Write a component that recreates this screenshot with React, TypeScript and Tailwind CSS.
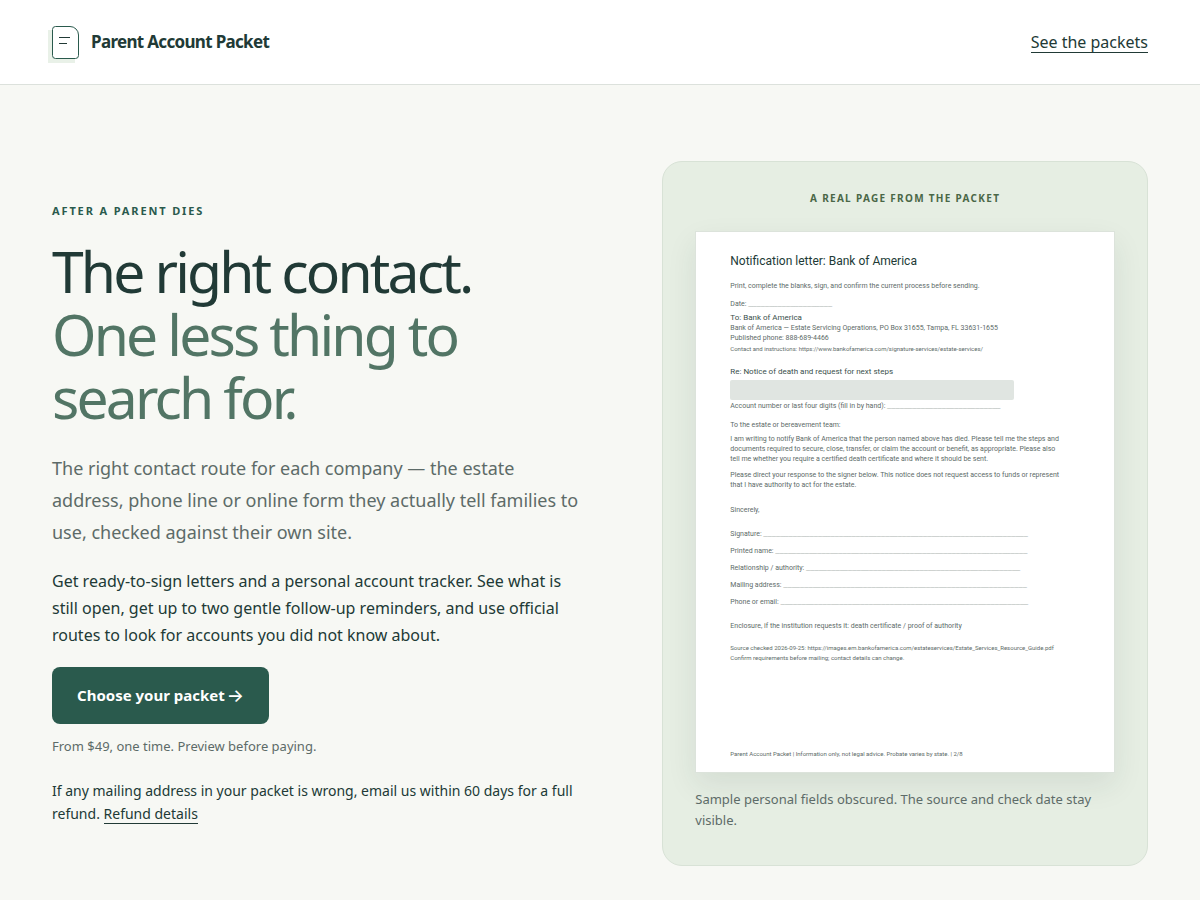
interface SignatureField {
  label: string;
  blanks: number;
}

const signatureFields: SignatureField[] = [
  { label: "Signature:", blanks: 63 },
  { label: "Printed name:", blanks: 60 },
  { label: "Relationship / authority:", blanks: 51 },
  { label: "Mailing address:", blanks: 58 },
  { label: "Phone or email:", blanks: 59 },
];

const Blank: React.FC<{ count: number }> = ({ count }) => {
  return (
    <span className="font-['Liberation_Mono',monospace] text-[#7b8784]">{"_".repeat(count)}</span>
  );
};

const Logo = () => {
  return (
    <svg width="31" height="34" viewBox="0 0 31 34" fill="none" aria-hidden="true" className="-ml-1 overflow-visible">
      <path d="M0 5h27v33H0z" fill="#e9f1e8" />
      <path
        d="M7.5 1.5H22a8.500 8.500 0 0 1 8.500 8.500v20.500a3 3 0 0 1-3 3h-20a3 3 0 0 1-3-3v-26a3 3 0 0 1 3-3z"
        fill="#fff"
        stroke="#2a5a4d"
      />
      <path d="M11 12.500h11M11 18.500h8" stroke="#213a36" />
    </svg>
  );
};

const Header = () => {
  return (
    <header className="border-b border-[#dce1dc] bg-white">
      <div className="flex h-[84px] items-center justify-between px-[52px]">
        <a href="#" className="flex items-center gap-3 text-[17px] font-bold tracking-[-0.04em]">
          <Logo />
          Parent Account Packet
        </a>
        <a href="#packets" className="border-b border-[#213a36] text-base leading-5">
          See the packets
        </a>
      </div>
    </header>
  );
};

const SamplePage = () => {
  return (
    <article className="flex aspect-[420/542] flex-col border border-[#dce3db] bg-white pt-[21px] pr-7 pb-[13px] pl-[34px] font-['Roboto',sans-serif] text-[7px] leading-[10px] text-[#5d6b68] shadow-[0_12px_28px_rgba(33,58,54,0.09)]">
      <h2 className="text-xs leading-4 text-[#213a36]">Notification letter: Bank of America</h2>
      <p className="mt-3">Print, complete the blanks, sign, and confirm the current process before sending.</p>
      <p className="mt-2">
        Date: <Blank count={20} />
      </p>
      <p className="mt-1 text-[8px] text-[#3a504c]">To: Bank of America</p>
      <p>Bank of America — Estate Servicing Operations, PO Box 31655, Tampa, FL 33631-1655</p>
      <p>Published phone: 888-689-4466</p>
      <p className="mt-px text-[6px]">
        Contact and instructions: https://www.bankofamerica.com/signature-services/estate-services/
      </p>
      <p className="mt-[13px] text-[8px] text-[#3a504c]">Re: Notice of death and request for next steps</p>
      <div className="mt-[3px] h-5 w-[284px] rounded-xs bg-[#e0e5e1]" />
      <p className="mt-px">
        Account number or last four digits (fill in by hand): <Blank count={27} />
      </p>
      <p className="mt-[9px]">To the estate or bereavement team:</p>
      <p className="mt-1 whitespace-nowrap">
        I am writing to notify Bank of America that the person named above has died. Please tell me the steps and
        <br />
        documents required to secure, close, transfer, or claim the account or benefit, as appropriate. Please also
        <br />
        tell me whether you require a certified death certificate and where it should be sent.
      </p>
      <p className="mt-1.5 whitespace-nowrap">
        Please direct your response to the signer below. This notice does not request access to funds or represent
        <br />
        that I have authority to act for the estate.
      </p>
      <p className="mt-[15px]">Sincerely,</p>
      <div className="mt-3.5 flex flex-col gap-[7px]">
        {signatureFields.map((field) => (
          <p key={field.label}>
            {field.label} <Blank count={field.blanks} />
          </p>
        ))}
      </div>
      <p className="mt-3.5">Enclosure, if the institution requests it: death certificate / proof of authority</p>
      <p className="mt-3 text-[6px]">
        Source checked 2026-09-25: https://images.em.bankofamerica.com/estateservices/Estate_Services_Resource_Guide.pdf
        <br />
        Confirm requirements before mailing; contact details can change.
      </p>
      <p className="mt-auto text-[6px]">
        Parent Account Packet | Information only, not legal advice. Probate varies by state. | 2/8
      </p>
    </article>
  );
};

const Hero = () => {
  return (
    <section className="grid grid-cols-[1.1fr_1fr] items-center gap-[76px] px-[52px] pt-[76px] pb-[34px]">
      <div className="pt-0.5">
        <p className="text-[11px] leading-4 font-bold tracking-[0.17em] text-[#2a5a4d] uppercase">
          After a parent dies
        </p>
        <h1 className="mt-[21px] text-[57px] leading-[63px] tracking-[-0.05em]">
          The right contact.
          <br />
          <span className="text-[#527565]">One less thing to search for.</span>
        </h1>
        <p className="mt-[23px] text-lg leading-8 text-[#5d6b68]">
          The right contact route for each company — the estate address, phone line or online form they actually tell
          families to use, checked against their own site.
        </p>
        <p className="mt-5 text-base leading-[27px]">
          Get ready-to-sign letters and a personal account tracker. See what is still open, get up to two gentle
          follow-up reminders, and use official routes to look for accounts you did not know about.
        </p>
        <a
          href="#packets"
          className="mt-[18px] inline-flex h-[57px] items-center gap-0.5 rounded-lg bg-[#2a5a4d] px-[25px] text-[15px] leading-[21px] font-bold text-white"
        >
          Choose your packet <span className="font-['Inter',sans-serif] text-lg leading-none font-medium">→</span>
        </a>
        <p className="mt-3 text-[13px] leading-5 text-[#5d6b68]">From $49, one time. Preview before paying.</p>
        <p className="mt-[23px] text-sm leading-[23px]">
          If any mailing address in your packet is wrong, email us within 60 days for a full refund.{" "}
          <a href="#refunds" className="border-b border-[#213a36]">
            Refund details
          </a>
        </p>
      </div>
      <figure className="rounded-[20px] border border-[#d8e2d6] bg-[#e6eee3] px-8 pt-7 pb-[34px]">
        <p className="mb-[25px] text-center text-[10px] leading-4 font-bold tracking-[0.13em] text-[#4a6747] uppercase">
          A real page from the packet
        </p>
        <SamplePage />
        <figcaption className="mt-4 text-[13px] leading-[21px] text-[#5d6b68]">
          Sample personal fields obscured. The source and check date stay visible.
        </figcaption>
      </figure>
    </section>
  );
};

const App = () => {
  return (
    <main className="min-h-screen bg-[#f7f8f4] font-['Noto_Sans',sans-serif] text-[#213a36]">
      <Header />
      <Hero />
    </main>
  );
};

export default App;
